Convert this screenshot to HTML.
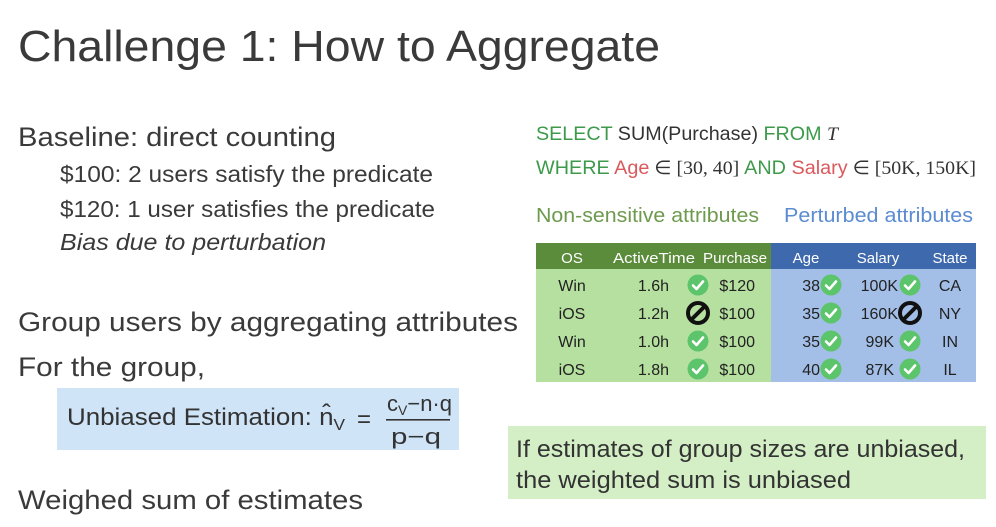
<!DOCTYPE html>
<html><head><meta charset="utf-8"><style>
html,body{margin:0;padding:0;background:#fff;width:996px;height:527px;overflow:hidden}
svg{display:block}
text{font-family:"Liberation Sans","DejaVu Sans",sans-serif}
</style></head><body>
<svg width="996" height="527" viewBox="0 0 996 527" xmlns="http://www.w3.org/2000/svg">
<defs>
<g id="ok"><circle r="10.5" fill="#5cc46a"/><path d="M-5,0.5 L-1.5,4 L5,-3.5" stroke="#fff" stroke-width="2.6" fill="none" stroke-linecap="round" stroke-linejoin="round"/></g>
<g id="no"><circle r="10" fill="none" stroke="#111" stroke-width="4"/><path d="M-6,6 L6,-6" stroke="#111" stroke-width="4"/></g>
</defs>
<g fill="#3a3a3a">
<text x="18" y="61" font-size="44" textLength="642" lengthAdjust="spacingAndGlyphs">Challenge 1: How to Aggregate</text>
<text x="18" y="146" font-size="27" textLength="318" lengthAdjust="spacingAndGlyphs">Baseline: direct counting</text>
<text x="60" y="182" font-size="23" textLength="373" lengthAdjust="spacingAndGlyphs">$100: 2 users satisfy the predicate</text>
<text x="60" y="217" font-size="23" textLength="375" lengthAdjust="spacingAndGlyphs">$120: 1 user satisfies the predicate</text>
<text x="60" y="250" font-size="23" font-style="italic" textLength="266" lengthAdjust="spacingAndGlyphs">Bias due to perturbation</text>
<text x="18" y="331" font-size="27" textLength="500" lengthAdjust="spacingAndGlyphs">Group users by aggregating attributes</text>
<text x="18" y="376" font-size="27" textLength="187" lengthAdjust="spacingAndGlyphs">For the group,</text>
<text x="18" y="509" font-size="27" textLength="345" lengthAdjust="spacingAndGlyphs">Weighed sum of estimates</text>
</g>
<rect x="57" y="388" width="402" height="62" fill="#cfe4f7"/>
<g fill="#333" font-size="24">
<text x="67" y="425" textLength="278" lengthAdjust="spacingAndGlyphs">Unbiased Estimation: n̂<tspan font-size="16" dy="5">V</tspan></text>
<text x="357" y="427">=</text>
<text x="387" y="411" font-size="22">c<tspan font-size="14" dy="4">V</tspan><tspan dy="-4">−n·q</tspan></text>
<rect x="386" y="419" width="64" height="1.6" fill="#333"/>
<text x="391" y="444" font-size="22" textLength="50" lengthAdjust="spacingAndGlyphs">p−q</text>
</g>
<g font-size="19">
<text x="536" y="140" textLength="302" lengthAdjust="spacingAndGlyphs"><tspan fill="#3c9a4a">SELECT</tspan><tspan fill="#333"> SUM(Purchase) </tspan><tspan fill="#3c9a4a">FROM </tspan><tspan fill="#333" font-style="italic" font-family="Liberation Serif, serif">T</tspan></text>
<text x="536" y="174" textLength="440" lengthAdjust="spacingAndGlyphs"><tspan fill="#3c9a4a">WHERE </tspan><tspan fill="#d9595c">Age</tspan><tspan fill="#333" font-family="Liberation Serif, serif"> ∈ [30, 40] </tspan><tspan fill="#3c9a4a">AND </tspan><tspan fill="#d9595c">Salary</tspan><tspan fill="#333" font-family="Liberation Serif, serif"> ∈ [50K, 150K]</tspan></text>
</g>
<text x="536" y="222" font-size="20" fill="#6e9a4e" textLength="223" lengthAdjust="spacingAndGlyphs">Non-sensitive attributes</text>
<text x="784" y="222" font-size="20" fill="#5b8bd0" textLength="189" lengthAdjust="spacingAndGlyphs">Perturbed attributes</text>
<rect x="536" y="243" width="235" height="26" fill="#5b8c3b"/>
<rect x="771" y="243" width="205" height="26" fill="#3f69ad"/>
<rect x="536" y="269" width="235" height="113" fill="#b6e0a0"/>
<rect x="771" y="269" width="205" height="113" fill="#a3bfe8"/>
<g font-size="15" fill="#fff" text-anchor="middle">
<text x="572" y="263">OS</text><text x="654" y="263" textLength="82" lengthAdjust="spacingAndGlyphs">ActiveTime</text><text x="735" y="263" textLength="64" lengthAdjust="spacingAndGlyphs">Purchase</text>
<text x="806" y="263">Age</text><text x="878" y="263">Salary</text><text x="950" y="263">State</text>
</g>
<g font-size="16" fill="#222">
<g text-anchor="middle"><text x="572" y="291">Win</text><text x="572" y="319">iOS</text><text x="572" y="347">Win</text><text x="572" y="375">iOS</text>
<text x="950" y="291">CA</text><text x="950" y="319">NY</text><text x="950" y="347">IN</text><text x="950" y="375">IL</text></g>
<g text-anchor="end"><text x="669" y="291">1.6h</text><text x="669" y="319">1.2h</text><text x="669" y="347">1.0h</text><text x="669" y="375">1.8h</text>
<text x="755" y="291">$120</text><text x="755" y="319">$100</text><text x="755" y="347">$100</text><text x="755" y="375">$100</text>
<text x="820" y="291">38</text><text x="820" y="319">35</text><text x="820" y="347">35</text><text x="820" y="375">40</text>
<text x="898" y="291">100K</text><text x="898" y="319">160K</text><text x="894" y="347">99K</text><text x="894" y="375">87K</text></g>
</g>
<use href="#ok" x="698" y="285"/><use href="#no" x="698" y="313"/><use href="#ok" x="698" y="341"/><use href="#ok" x="698" y="369"/>
<use href="#ok" x="831" y="285"/><use href="#ok" x="831" y="313"/><use href="#ok" x="831" y="341"/><use href="#ok" x="831" y="369"/>
<use href="#ok" x="910" y="285"/><use href="#no" x="910" y="313"/><use href="#ok" x="910" y="341"/><use href="#ok" x="910" y="369"/>
<rect x="508" y="426" width="478" height="73" fill="#d4efc6"/>
<g fill="#333" font-size="24">
<text x="516" y="457" textLength="449" lengthAdjust="spacingAndGlyphs">If estimates of group sizes are unbiased,</text>
<text x="516" y="488" textLength="335" lengthAdjust="spacingAndGlyphs">the weighted sum is unbiased</text>
</g>
</svg>
</body></html>
